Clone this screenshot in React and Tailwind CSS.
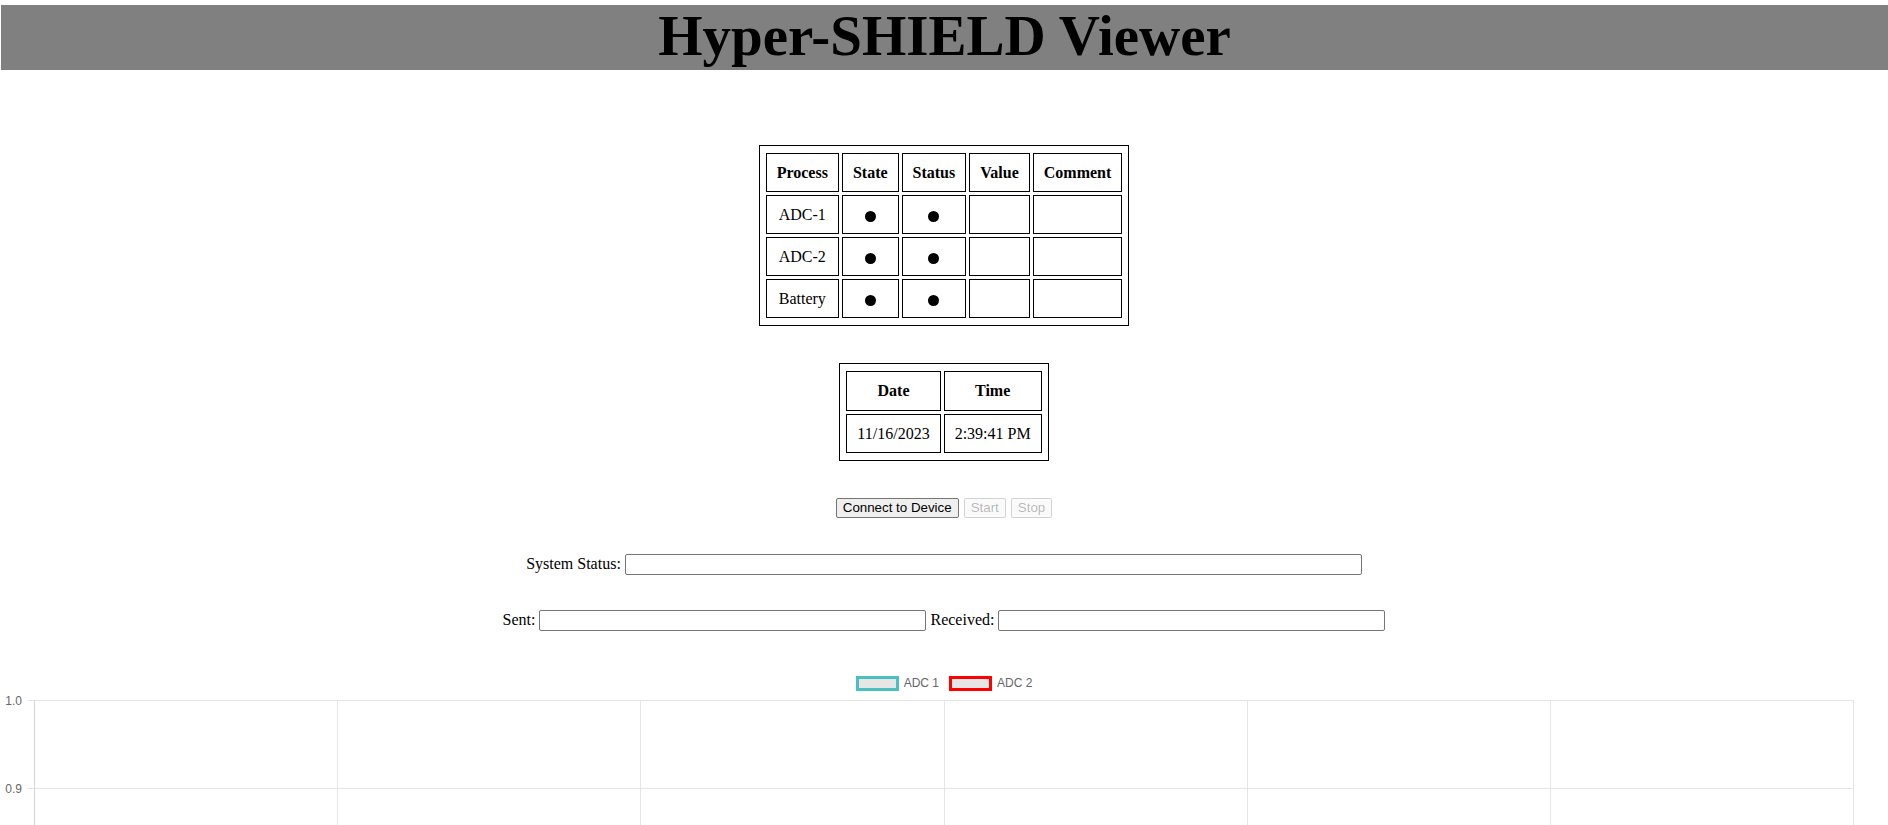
import React from "react";

const cell = "border border-black px-[10px] py-[10px] leading-[17px] text-center text-[16px]";
const cellTall = "border border-black px-[10px] py-[10px] leading-[18px] text-center text-[16px]";

function Dot() {
  return <span className="inline-block w-[11px] h-[11px] rounded-full bg-black align-middle" />;
}

function Chart() {
  const xs = [0, 1, 2, 3, 4, 5, 6].map((k) => Math.round(34 + k * 303.17));
  const ys = [0, 1].map((k) => Math.round(5 + k * 88.3));
  const labels = ["1.0", "0.9"];
  return (
    <svg width="1888" height="130" className="block mt-[3px]" shapeRendering="crispEdges">
      {ys.map((y, i) => (
        <line key={"h" + i} x1={27} x2={1854} y1={y + 0.5} y2={y + 0.5} stroke="#e5e5e5" strokeWidth="1" />
      ))}
      {xs.map((x, i) => (
        <line key={"v" + i} x1={x + 0.5} x2={x + 0.5} y1={5} y2={130} stroke={i === 0 ? "#d6d6d6" : "#e5e5e5"} strokeWidth="1" />
      ))}
      {ys.map((y, i) => (
        <text
          key={"t" + i}
          x={22}
          y={y + 4.5}
          textAnchor="end"
          fontFamily="Liberation Sans, Arial, sans-serif"
          fontSize="12"
          fill="#666666"
        >
          {labels[i]}
        </text>
      ))}
    </svg>
  );
}

export default function App() {
  return (
    <div className="font-['Liberation_Serif',serif] text-black bg-white h-[825px] overflow-hidden">
      <h1 className="mt-[5px] ml-[1px] h-[65px] bg-[#808080] text-center text-[57px] font-bold leading-[62px]">
        Hyper-SHIELD Viewer
      </h1>

      <table className="mx-auto mt-[75px] border border-black px-[3px] py-[4px] border-separate border-spacing-[3px]">
        <tbody>
          <tr>
            <th className={cell + " font-bold"}>Process</th>
            <th className={cell + " font-bold"}>State</th>
            <th className={cell + " font-bold"}>Status</th>
            <th className={cell + " font-bold"}>Value</th>
            <th className={cell + " font-bold"}>Comment</th>
          </tr>
          {["ADC-1", "ADC-2", "Battery"].map((p) => (
            <tr key={p}>
              <td className={cell}>{p}</td>
              <td className={cell}>
                <Dot />
              </td>
              <td className={cell}>
                <Dot />
              </td>
              <td className={cell}></td>
              <td className={cell}></td>
            </tr>
          ))}
        </tbody>
      </table>

      <table className="mx-auto mt-[37px] border border-black px-[3px] py-[4px] border-separate border-spacing-[3px]">
        <tbody>
          <tr>
            <th className={cellTall + " font-bold"}>Date</th>
            <th className={cellTall + " font-bold"}>Time</th>
          </tr>
          <tr>
            <td className={cell}>11/16/2023</td>
            <td className={cell}>2:39:41 PM</td>
          </tr>
        </tbody>
      </table>

      <div className="mt-[37px] flex justify-center gap-[5px] font-['Liberation_Sans',Arial,sans-serif] text-[13.333px]">
        <button className="h-[20px] px-[6px] leading-[16px] bg-[#efefef] border border-[#767676] rounded-[2px] text-black">
          Connect to Device
        </button>
        <button disabled className="h-[20px] px-[6px] leading-[16px] bg-[#efefef]/30 border border-[#767676]/30 rounded-[2px] text-[#101010]/30">
          Start
        </button>
        <button disabled className="h-[20px] px-[6px] leading-[16px] bg-[#efefef]/30 border border-[#767676]/30 rounded-[2px] text-[#101010]/30">
          Stop
        </button>
      </div>

      <div className="mt-[34px] flex justify-center items-center gap-[4px] text-[16px]">
        <span>System Status:</span>
        <input className="w-[737px] h-[21px] border border-[#767676] rounded-[2px] px-[2px] bg-white" />
      </div>

      <div className="mt-[32px] flex justify-center items-center gap-[4px] text-[16px]">
        <span>Sent:</span>
        <input className="w-[387px] h-[21px] border border-[#767676] rounded-[2px] px-[2px] bg-white" />
        <span>Received:</span>
        <input className="w-[387px] h-[21px] border border-[#767676] rounded-[2px] px-[2px] bg-white" />
      </div>

      <div className="mt-[42px] flex justify-center items-center font-['Liberation_Sans',Arial,sans-serif] text-[12px] text-[#666666]">
        <span className="w-[43px] h-[15px] border-[3px] border-[#4bc0c0] bg-[#e6e6e6]" />
        <span className="ml-[5px]">ADC 1</span>
        <span className="ml-[10px] w-[43px] h-[15px] border-[3px] border-[#ff0000] bg-[#e6e6e6]" />
        <span className="ml-[5px]">ADC 2</span>
      </div>

      <Chart />
    </div>
  );
}
